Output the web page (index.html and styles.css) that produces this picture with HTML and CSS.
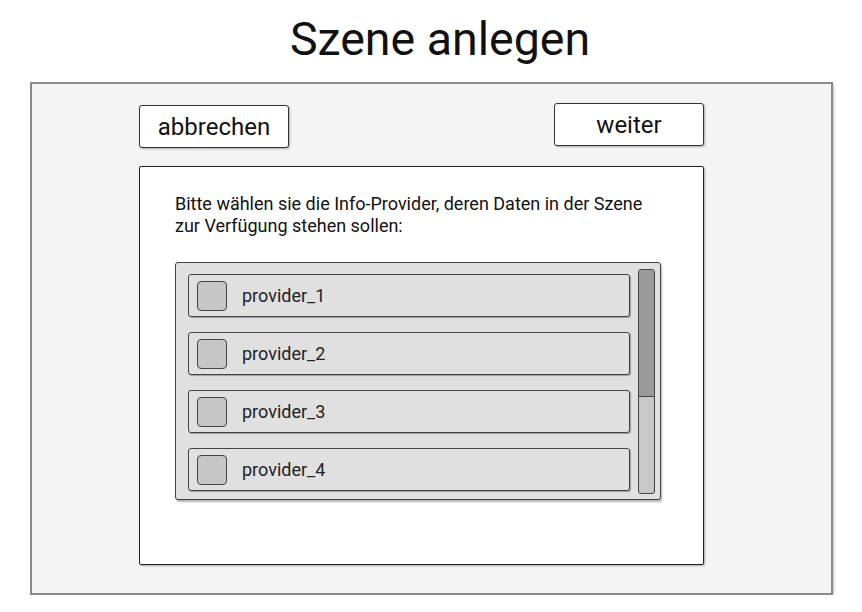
FILE: index.html
```html
<!DOCTYPE html>
<html lang="de">
<head>
<meta charset="utf-8">
<title>Szene anlegen</title>
<link rel="stylesheet" href="styles.css">
</head>
<body>
<h1 class="title">Szene anlegen</h1>
<div class="frame">
  <div class="actions">
    <button class="btn btn-cancel">abbrechen</button>
    <button class="btn btn-next">weiter</button>
  </div>
  <div class="card">
    <p class="intro">Bitte wählen sie die Info-Provider, deren Daten in der Szene<br>zur Verfügung stehen sollen:</p>
    <div class="list">
      <div class="items">
        <div class="item"><span class="check"></span><span class="label">provider_1</span></div>
        <div class="item"><span class="check"></span><span class="label">provider_2</span></div>
        <div class="item"><span class="check"></span><span class="label">provider_3</span></div>
        <div class="item"><span class="check"></span><span class="label">provider_4</span></div>
      </div>
      <div class="scrollbar"><div class="thumb"></div></div>
    </div>
  </div>
</div>
</body>
</html>
```

FILE: styles.css
```css
* { box-sizing: border-box; }

body {
  margin: 0;
  background: #ffffff;
  font-family: Roboto, "Liberation Sans", sans-serif;
  color: #111;
}

.title {
  margin: 0 0 15px 0;
  padding: 11px 0 0 18px;
  font-size: 46.5px;
  line-height: 56px;
  font-weight: 400;
  text-align: center;
  color: #111;
}

.frame {
  margin-left: 30px;
  width: 803px;
  height: 513px;
  background: #f4f4f4;
  border: 2px solid #8a8a8a;
  box-shadow: 1px 2px 2px rgba(0, 0, 0, 0.25);
  padding: 19px 0 0 107px;
}

.actions {
  width: 565px;
  display: flex;
  justify-content: space-between;
  align-items: flex-start;
}

.btn {
  width: 150px;
  height: 43px;
  background: #fff;
  border: 1px solid #333;
  border-radius: 3px;
  box-shadow: 1px 1px 2px rgba(0, 0, 0, 0.3);
  font-family: Roboto, "Liberation Sans", sans-serif;
  font-size: 24px;
  color: #111;
  padding: 0;
}

.btn-cancel { margin-top: 2px; }

.card {
  margin-top: 18px;
  width: 565px;
  height: 399px;
  background: #fff;
  border: 1px solid #222;
  border-radius: 2px;
  box-shadow: 1px 1px 2px rgba(0, 0, 0, 0.3);
  padding: 26px 0 0 35px;
}

.intro {
  margin: 0;
  font-size: 18px;
  line-height: 22px;
  color: #111;
}

.list {
  margin-top: 25px;
  width: 486px;
  height: 238px;
  background: #e0e0e0;
  border: 1px solid #444;
  border-radius: 3px;
  box-shadow: 1px 2px 2px rgba(0, 0, 0, 0.3);
  display: flex;
  padding: 0 5px 0 12px;
  gap: 8px;
}

.items {
  width: 442px;
  padding-top: 11px;
  display: flex;
  flex-direction: column;
  gap: 15px;
}

.item {
  height: 43px;
  background: #e0e0e0;
  border: 1px solid #444;
  border-radius: 3px;
  box-shadow: 1px 1px 1px rgba(0, 0, 0, 0.3);
  display: flex;
  align-items: center;
  padding-left: 8px;
  gap: 15px;
}

.check {
  width: 30px;
  height: 30px;
  background: #c6c6c6;
  border: 1px solid #444;
  border-radius: 4px;
  flex: none;
}

.label {
  font-size: 18px;
  color: #222;
}

.scrollbar {
  margin-top: 6px;
  width: 17px;
  height: 225px;
  background: #c8c8c8;
  border: 1px solid #444;
  border-radius: 3px;
  overflow: hidden;
}

.thumb {
  height: 127px;
  background: #9a9a9a;
  border-bottom: 1px solid #444;
}
```
